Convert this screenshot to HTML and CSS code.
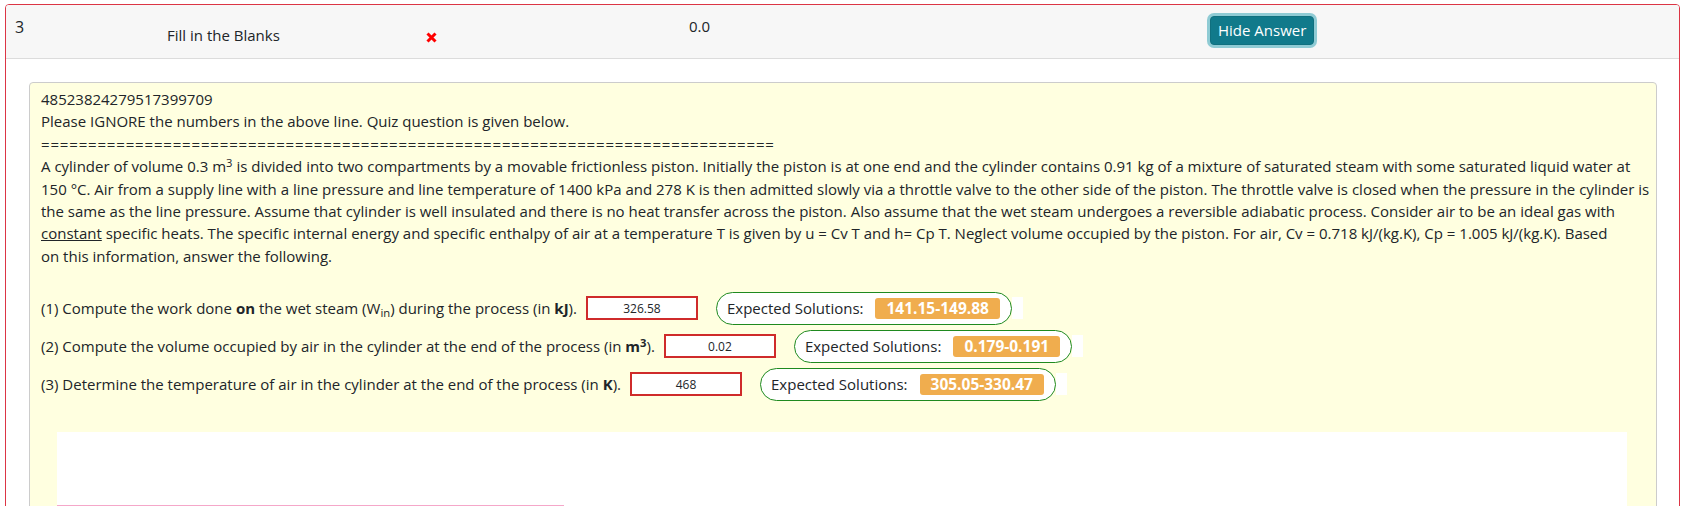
FILE: index.html
```html
<!DOCTYPE html>
<html>
<head>
<meta charset="utf-8">
<link rel="stylesheet" href="styles.css">
</head>
<body>
<div class="page">
  <div class="card">
    <div class="card-header">
      <div class="c-num">3</div>
      <div class="c-type">Fill in the Blanks</div>
      <div class="c-mark"><svg width="11" height="11" viewBox="0 0 11 11"><path d="M1.5 1.5 L9.5 9.5 M9.5 1.5 L1.5 9.5" stroke="#f00" stroke-width="3" stroke-linecap="butt"/></svg></div>
      <div class="c-score">0.0</div>
      <div class="c-btn"><button class="btn">Hide Answer</button></div>
    </div>
    <div class="card-body">
      <div class="question">
        <div class="q-text">48523824279517399709<br>Please IGNORE the numbers in the above line. Quiz question is given below.<br><span class="rule">==============================================================================</span><br>A cylinder of volume 0.3 m<sup>3</sup> is divided into two compartments by a movable frictionless piston. Initially the piston is at one end and the cylinder contains 0.91 kg of a mixture of saturated steam with some saturated liquid water at<br>150 °C. Air from a supply line with a line pressure and line temperature of 1400 kPa and 278 K is then admitted slowly via a throttle valve to the other side of the piston. The throttle valve is closed when the pressure in the cylinder is<br>the same as the line pressure. Assume that cylinder is well insulated and there is no heat transfer across the piston. Also assume that the wet steam undergoes a reversible adiabatic process. Consider air to be an ideal gas with<br><u>constant</u> specific heats. The specific internal energy and specific enthalpy of air at a temperature T is given by u = Cv T and h= Cp T. Neglect volume occupied by the piston. For air, Cv = 0.718 kJ/(kg.K), Cp = 1.005 kJ/(kg.K). Based<br>on this information, answer the following.</div>
        <div class="answers">
          <div class="ans-row"><span class="ans-text">(1) Compute the work done <b>on</b> the wet steam (W<sub>in</sub>) during the process (in <b>kJ</b>).</span><span class="inp">326.58</span><span class="pill">Expected Solutions:<span class="badge">141.15-149.88</span></span><span class="tail"></span></div>
          <div class="ans-row"><span class="ans-text">(2) Compute the volume occupied by air in the cylinder at the end of the process (in <b>m<sup>3</sup></b>).</span><span class="inp">0.02</span><span class="pill">Expected Solutions:<span class="badge">0.179-0.191</span></span><span class="tail"></span></div>
          <div class="ans-row"><span class="ans-text">(3) Determine the temperature of air in the cylinder at the end of the process (in <b>K</b>).</span><span class="inp">468</span><span class="pill">Expected Solutions:<span class="badge">305.05-330.47</span></span><span class="tail"></span></div>
        </div>
        <div class="white-box"><div class="pink"></div></div>
      </div>
    </div>
  </div>
</div>
</body>
</html>
```

FILE: styles.css
```css
* { box-sizing: border-box; }
body {
  margin: 0;
  font-family: "Open Sans", sans-serif;
  font-size: 15px;
  color: #212529;
  background: #fff;
}
.page { padding: 4px 5px 0 5px; }
.card {
  border: 1px solid #dc3545;
  border-radius: 4px;
  height: 520px;
  overflow: hidden;
}
.card-header {
  display: flex;
  align-items: flex-start;
  height: 54px;
  background: #f7f7f7;
  border-bottom: 1px solid #dcdcdc;
  font-size: 15px;
  line-height: 24px;
}
.c-num { width: 161px; padding: 10px 0 0 9px; font-size: 16px; }
.c-type { width: 259px; padding-top: 18px; }
.c-mark { width: 263px; padding-top: 27px; line-height: 0; }
.c-score { width: 521px; padding-top: 9px; }
.c-btn { padding-top: 11px; }
.btn {
  font: inherit;
  font-size: 15px;
  line-height: 21px;
  color: #fff;
  background: #117a8b;
  border: 1px solid #10707f;
  border-radius: 4px;
  padding: 3px 7px;
  box-shadow: 0 0 0 3px #8fcbd4;
}
.card-body { padding: 23px 22px 0 23px; }
.question {
  background: #ffffe0;
  border: 1px solid #ccc;
  border-radius: 4px;
  padding: 5px 12px 0 11px;
  height: 460px;
}
.q-text { line-height: 22.4px; white-space: nowrap; }
.rule { letter-spacing: 0.83px; }
sup, sub { font-size: 75%; line-height: 0; position: relative; vertical-align: baseline; }
sup { top: -0.5em; }
sub { bottom: -0.25em; }
.answers { margin-top: 22px; }
.ans-row {
  display: flex;
  align-items: center;
  height: 38px;
  white-space: nowrap;
}
.inp {
  display: inline-flex;
  justify-content: center;
  align-items: center;
  width: 112px;
  height: 24px;
  margin: 0 18px 0 9px;
  border: 2px solid #cf2b2b;
  background: #fff;
  font-size: 12px;
}
.pill {
  display: inline-flex;
  align-items: center;
  height: 33px;
  padding: 0 11px 0 10px;
  border: 1.5px solid #1f8a1f;
  border-radius: 17px;
  background: #fff;
  font-size: 15px;
}
.badge {
  display: inline-flex;
  align-items: center;
  height: 21px;
  margin-left: 12px;
  padding: 0 11px;
  border-radius: 3px;
  background: #f0ad4e;
  color: #fff;
  font-weight: bold;
  font-size: 15.5px;
}
.tail { display: inline-block; width: 11px; height: 22px; background: #fff; }
.white-box {
  margin: 29px 17px 0 16px;
  height: 120px;
  background: #fff;
}
.pink {
  width: 507px;
  height: 74px;
  border-bottom: 1px solid #f5a7c9;
}
```
